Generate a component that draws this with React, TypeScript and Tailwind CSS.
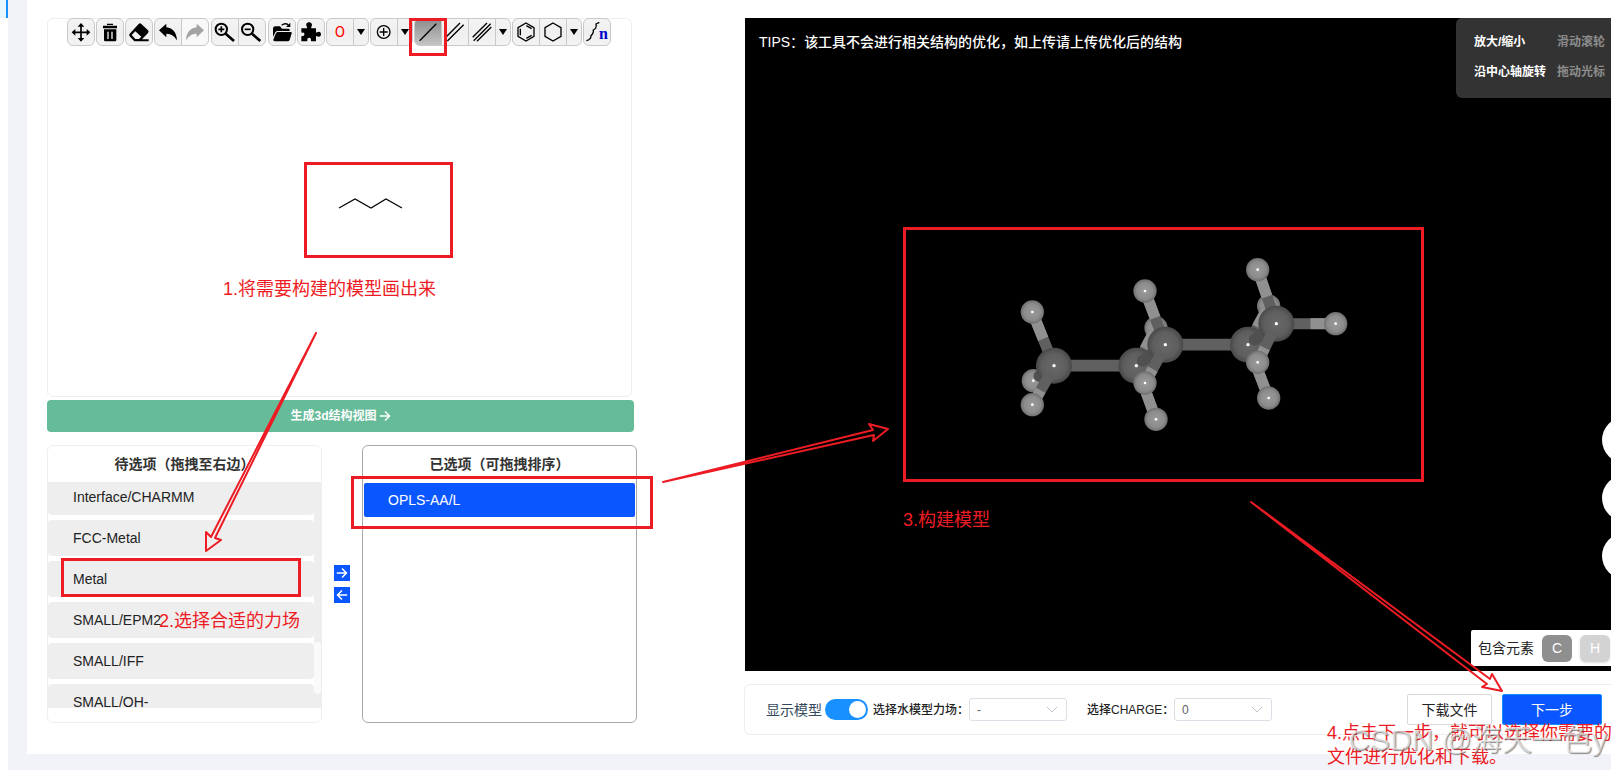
import { useState, type ReactNode } from "react";

type ToolProps = {
  label: string;
  active?: boolean;
  disabled?: boolean;
  children: ReactNode;
};

const candidates = [
  "Interface/CHARMM",
  "FCC-Metal",
  "Metal",
  "SMALL/EPM2",
  "SMALL/IFF",
  "SMALL/OH-",
];

function Tool({ label, active, disabled, children }: ToolProps) {
  return (
    <button
      type="button"
      aria-label={label}
      disabled={disabled}
      className={
        "relative -ml-px flex h-7 w-7 items-center justify-center border border-[#c9c9c9] first:ml-0 first:rounded-l-md last:rounded-r-md " +
        (active
          ? "bg-linear-to-b from-[#8c8c8c] to-[#c4c4c4]"
          : disabled
            ? "bg-[#f8f8f8] text-[#a3a3a3]"
            : "bg-linear-to-b from-[#f4f4f4] via-[#efefef] to-[#f3f3f3] text-black")
      }
    >
      {children}
    </button>
  );
}

function Group({ children }: { children: ReactNode }) {
  return <div className="flex">{children}</div>;
}

function Glyph({ children }: { children: ReactNode }) {
  return (
    <svg viewBox="0 0 78 78" className="h-[26px] w-[26px] shrink-0" fill="currentColor">
      {children}
    </svg>
  );
}

function Lines({ d, width = 4 }: { d: string; width?: number }) {
  return <path d={d} fill="none" stroke="currentColor" strokeWidth={width} />;
}

function DropTool({ label }: { label: string }) {
  return (
    <button
      type="button"
      aria-label={label}
      className="-ml-px flex h-7 w-4 items-center justify-center rounded-r-md border border-[#c9c9c9] bg-linear-to-b from-[#f4f4f4] via-[#efefef] to-[#f3f3f3]"
    >
      <svg viewBox="0 0 8 6" className="h-[6px] w-2">
        <path d="M0 0h8L4 6z" />
      </svg>
    </button>
  );
}

function Toolbar() {
  return (
    <div className="-mt-px ml-[19px] flex gap-px">
      <Group>
        <Tool label="Move">
          <Glyph>
            <Lines d="M39 18V62M17 40H61" width={5} />
            <path d="M39 12l10 11H29zM39 68l10-11H29zM11 40l11-10v20zM67 40L56 30v20z" />
          </Glyph>
        </Tool>
      </Group>
      <Group>
        <Tool label="Clear">
          <Glyph>
            <path d="M30 14h18v4H30zM18 20h42v8H18z" />
            <path
              fillRule="evenodd"
              d="M21 31h37v32q0 4-4 4H25q-4 0-4-4zM31 38v22h4V38zM43 38v22h4V38z"
            />
          </Glyph>
        </Tool>
      </Group>
      <Group>
        <Tool label="Erase">
          <Glyph>
            <path
              fillRule="evenodd"
              d="M38 15q4-4 8 0l20 19q4 4 0 8L48 61h20v6H25L11 52q-3-4 0-8zM28 37L17 48l11 12h11l7-7z"
            />
          </Glyph>
        </Tool>
      </Group>
      <div className="mr-px flex">
        <Tool label="Undo">
          <Glyph>
            <path d="M12 34L34 14v11c20 2 31 17 32 39-8-13-17-19-32-20v11z" />
          </Glyph>
        </Tool>
        <Tool label="Redo" disabled>
          <Glyph>
            <path d="M66 34L44 14v11C24 27 13 42 12 64c8-13 17-19 32-20v11z" />
          </Glyph>
        </Tool>
      </div>
      <div className="mr-px flex">
        <Tool label="Zoom in">
          <Glyph>
            <circle cx="28" cy="31" r="17" fill="none" stroke="currentColor" strokeWidth="6" />
            <Lines d="M28 22v18M19 31h18" width={5} />
            <Lines d="M41 44L66 66" width={8} />
          </Glyph>
        </Tool>
        <Tool label="Zoom out">
          <Glyph>
            <circle cx="26" cy="31" r="17" fill="none" stroke="currentColor" strokeWidth="6" />
            <Lines d="M17 31h18" width={5} />
            <Lines d="M39 44L64 66" width={8} />
          </Glyph>
        </Tool>
      </div>
      <Group>
        <Tool label="Open">
          <Glyph>
            <path d="M12 29q0-7 7-7h14l6 7h19q4 0 4 4v3H26q-5 0-7 4l-7 14z" />
            <path d="M26 39h39q4 0 3 4l-6 20q-2 4-6 4H18q-5 0-5-5l7-18q2-5 6-5z" />
            <Lines d="M38 19q11-9 20-1" width={4} />
            <path d="M64 11v13H51z" />
          </Glyph>
        </Tool>
      </Group>
      <Group>
        <Tool label="Templates">
          <Glyph>
            <path d="M10 28h16q3 0 1-4c-5-7-1-14 6-14s12 7 7 14q-2 4 1 4h13v11q0 3 4 1c6-4 11 0 11 6s-5 10-11 6q-4-2-4 1v14H41q-3 0-2-4c1-9-12-9-11 0q1 4-2 4H10V53q0-3 4-2c7 2 7-12 0-10q-4 1-4-2z" />
          </Glyph>
        </Tool>
      </Group>
      <Group>
        <Tool label="Oxygen">
          <span className="font-[Roboto,sans-serif] text-[15px] leading-none text-[#ff0000]">O</span>
        </Tool>
        <DropTool label="Choose element" />
      </Group>
      <Group>
        <Tool label="Increase charge">
          <Glyph>
            <circle cx="38" cy="39" r="19" fill="none" stroke="currentColor" strokeWidth="4" />
            <Lines d="M38 27v24M26 39h24" />
          </Glyph>
        </Tool>
        <DropTool label="Choose attribute" />
      </Group>
      <Group>
        <Tool label="Single bond" active>
          <Glyph>
            <Lines d="M14 65L64 14" />
          </Glyph>
        </Tool>
        <Tool label="Double bond">
          <Glyph>
            <Lines d="M10 56L54 12M16 66L65 17" />
          </Glyph>
        </Tool>
        <Tool label="Triple bond">
          <Glyph>
            <Lines d="M11 55L54 12M14 65L65 14M24 67L67 24" />
          </Glyph>
        </Tool>
        <DropTool label="Choose bond" />
      </Group>
      <Group>
        <Tool label="Benzene">
          <Glyph>
            <Lines d="M39 12L63 26V52L39 66L15 52V26ZM22 29V49M40 20L56 29M56 49L40 58" />
          </Glyph>
        </Tool>
        <Tool label="Cyclohexane">
          <Glyph>
            <Lines d="M39 12L63 26V52L39 66L15 52V26Z" />
          </Glyph>
        </Tool>
        <DropTool label="Choose ring" />
      </Group>
      <Group>
        <Tool label="Chain">
          <Glyph>
            <Lines d="M46 10q-6 3-10 5q2 7-1 12q-2 4-7 6q1 6-2 11q-2 4-5 6q0 6-3 9q-4 5-11 6" />
          </Glyph>
          <span className="absolute right-[2px] bottom-[3px] font-['Liberation_Serif',serif] text-base leading-none font-bold text-[#0000cc]">
            n
          </span>
        </Tool>
      </Group>
    </div>
  );
}

type Point = [number, number];
type Bond = { from: Point; to: Point; tone: "cc" | "ch" | "hidden" };

function BondShape({ from, to, tone }: Bond) {
  const mid: Point = [(from[0] + to[0]) / 2, (from[1] + to[1]) / 2];
  return (
    <g strokeWidth={tone === "ch" ? 33 : 35}>
      <line
        x1={from[0]}
        y1={from[1]}
        x2={to[0]}
        y2={to[1]}
        stroke={tone === "hidden" ? "#505050" : "#606060"}
        strokeLinecap={tone === "hidden" ? "round" : "butt"}
      />
      {tone === "ch" && (
        <line x1={mid[0]} y1={mid[1]} x2={to[0]} y2={to[1]} stroke="#909090" />
      )}
    </g>
  );
}

function Atom({ x, y, carbon }: { x: number; y: number; carbon?: boolean }) {
  return (
    <g>
      <circle cx={x} cy={y} r={carbon ? 54 : 35} fill={carbon ? "url(#carbon)" : "url(#hydrogen)"} />
      <circle cx={x} cy={y} r={carbon ? 5 : 4} fill="#ffffff" />
    </g>
  );
}

function Molecule() {
  return (
    <svg viewBox="0 0 1200 630" className="ml-1 h-[210px] w-[400px]" role="img" aria-label="戊烷">
      <defs>
        <radialGradient id="carbon">
          <stop offset="0" stopColor="#686868" />
          <stop offset="0.7" stopColor="#5e5e5e" />
          <stop offset="1" stopColor="#484848" />
        </radialGradient>
        <radialGradient id="hydrogen">
          <stop offset="0" stopColor="#9a9a9a" />
          <stop offset="0.7" stopColor="#8c8c8c" />
          <stop offset="1" stopColor="#6e6e6e" />
        </radialGradient>
      </defs>

      <Atom x={160} y={422} />
      <BondShape from={[222, 377]} to={[178, 408]} tone="hidden" />
      <BondShape from={[222, 377]} to={[157, 216]} tone="ch" />
      <BondShape from={[222, 377]} to={[469, 377]} tone="cc" />
      <Atom x={222} y={377} carbon />
      <BondShape from={[207, 408]} to={[157, 494]} tone="ch" />
      <Atom x={157} y={216} />
      <Atom x={157} y={494} />

      <Atom x={528} y={264} />
      <BondShape from={[469, 377]} to={[522, 275]} tone="ch" />
      <BondShape from={[469, 377]} to={[528, 538]} tone="ch" />
      <BondShape from={[556, 314]} to={[804, 314]} tone="cc" />
      <Atom x={469} y={377} carbon />
      <BondShape from={[488, 362]} to={[540, 325]} tone="hidden" />
      <BondShape from={[556, 314]} to={[495, 153]} tone="ch" />
      <Atom x={556} y={314} carbon />
      <BondShape from={[541, 345]} to={[495, 429]} tone="ch" />
      <Atom x={495} y={153} />
      <Atom x={495} y={429} />
      <Atom x={528} y={538} />

      <Atom x={866} y={198} />
      <BondShape from={[804, 314]} to={[860, 209]} tone="ch" />
      <BondShape from={[804, 314]} to={[866, 474]} tone="ch" />
      <Atom x={804} y={314} carbon />
      <BondShape from={[824, 299]} to={[870, 265]} tone="hidden" />
      <BondShape from={[889, 251]} to={[833, 89]} tone="ch" />
      <BondShape from={[916, 251]} to={[1067, 251]} tone="ch" />
      <Atom x={889} y={251} carbon />
      <BondShape from={[876, 280]} to={[833, 367]} tone="ch" />
      <Atom x={833} y={89} />
      <Atom x={833} y={367} />
      <Atom x={866} y={474} />
      <Atom x={1067} y={251} />
    </svg>
  );
}

function ArrowIcon({ left, className }: { left?: boolean; className: string }) {
  return (
    <svg viewBox="0 0 16 16" className={className} fill="none" stroke="currentColor" strokeWidth="2">
      <path d={left ? "M15 8H2M8 2L2 8l6 6" : "M1 8h13M8 2l6 6-6 6"} />
    </svg>
  );
}

function ForceFieldLists() {
  return (
    <div className="mt-[13px] flex h-[278px]">
      <section className="flex-1 rounded-md border border-[#eeeeee]">
        <h2 className="h-9 text-center text-sm leading-9 font-bold text-[#333333]">
          待选项（拖拽至右边）
        </h2>
        <div className="flex h-[226px] overflow-hidden bg-[#eeeeee]">
          <ul className="-mt-[3px] flex flex-1 flex-col gap-[5px] bg-white">
            {candidates.map((name) => (
              <li
                key={name}
                className="flex h-9 shrink-0 items-center rounded bg-[#eeeeee] pl-[25px] text-sm leading-none text-[#222222]"
              >
                {name}
              </li>
            ))}
          </ul>
          <div className="flex w-[7px] flex-col justify-end pb-[14px]">
            <div className="h-[52px] rounded bg-[#fafafa]" />
          </div>
        </div>
      </section>
      <div className="flex w-10 flex-col items-center justify-center gap-[6px]">
        <button type="button" aria-label="添加" className="bg-[#0b57ff] p-0.5 text-white">
          <ArrowIcon className="h-3 w-3" />
        </button>
        <button type="button" aria-label="移除" className="bg-[#0b57ff] p-0.5 text-white">
          <ArrowIcon left className="h-3 w-3" />
        </button>
      </div>
      <section className="flex-1 rounded-md border border-[#a9a9a9]">
        <h2 className="h-[37px] text-center text-sm leading-9 font-bold text-[#333333]">
          已选项（可拖拽排序）
        </h2>
        <ul className="px-px">
          <li className="h-[34px] rounded-xs bg-[#0b57ff] pl-6 text-sm leading-[34px] text-white">
            OPLS-AA/L
          </li>
        </ul>
      </section>
    </div>
  );
}

function SmallSelect({ id, options }: { id: string; options: string[] }) {
  return (
    <div className="relative">
      <select
        id={id}
        className="h-[23px] w-[98px] appearance-none rounded-[3px] border border-[#dcdfe6] bg-white pl-[7px] text-xs text-[#606266]"
      >
        {options.map((option) => (
          <option key={option}>{option}</option>
        ))}
      </select>
      <svg
        viewBox="0 0 10 6"
        className="pointer-events-none absolute top-[9px] right-[10px] h-[6px] w-[10px]"
        fill="none"
        stroke="#c0c4cc"
      >
        <path d="M0 0L5 5L10 0" />
      </svg>
    </div>
  );
}

function Viewer() {
  return (
    <div className="relative flex h-[653px] items-center justify-center overflow-hidden bg-black">
      <p className="absolute top-[13px] left-[14px] text-sm leading-[22px] font-medium text-white">
        <span className="font-normal">TIPS：</span>
        该工具不会进行相关结构的优化，如上传请上传优化后的结构
      </p>
      <Molecule />
      <dl className="absolute top-0 right-0 grid h-20 w-[155px] grid-cols-[83px_auto] content-start rounded-l-md bg-[#333333] pt-[9px] pl-[18px] text-xs leading-[30px] font-bold whitespace-nowrap text-white">
        <dt>放大/缩小</dt>
        <dd className="text-[#8c8c8c]">滑动滚轮</dd>
        <dt>沿中心轴旋转</dt>
        <dd className="text-[#8c8c8c]">拖动光标</dd>
      </dl>
      <div className="absolute top-[399px] -right-[37px] flex flex-col gap-3">
        <button type="button" aria-label="放大" className="h-[46px] w-[46px] rounded-full bg-white" />
        <button type="button" aria-label="缩小" className="h-[46px] w-[46px] rounded-full bg-white" />
        <button type="button" aria-label="重置" className="h-[46px] w-[46px] rounded-full bg-white" />
      </div>
      <div className="absolute right-0 bottom-[5px] flex h-9 items-center gap-2 rounded-l-xs bg-white pr-px pl-[7px] text-sm text-[#222222]">
        包含元素
        <button type="button" className="h-[27px] w-[30px] rounded-md bg-[#8f8f8f] text-white">
          C
        </button>
        <button type="button" className="h-[27px] w-[30px] rounded-md bg-[#d3d3d3] text-white shadow">
          H
        </button>
      </div>
    </div>
  );
}

function ModelBar() {
  const [visible, setVisible] = useState(true);

  return (
    <div className="mt-[13px] -ml-px flex h-[51px] items-center rounded-l-md border border-r-0 border-[#eeeeee] pr-[9px] pl-[21px] text-xs whitespace-nowrap text-[#222222]">
      <label htmlFor="show-model" className="text-sm text-[#34495e]">
        显示模型
      </label>
      <span className="relative ml-[3px] h-[21px] w-[43px]">
        <input
          id="show-model"
          type="checkbox"
          role="switch"
          checked={visible}
          onChange={(event) => setVisible(event.target.checked)}
          className="peer block h-[21px] w-[43px] appearance-none rounded-full bg-[#bfbfbf] checked:bg-[#1890ff]"
        />
        <span className="pointer-events-none absolute top-[2px] left-[2px] h-[17px] w-[17px] rounded-full bg-white peer-checked:left-6" />
      </span>
      <label htmlFor="water-model" className="ml-[5px] w-24 font-medium">
        选择水模型力场：
      </label>
      <SmallSelect id="water-model" options={["-", "SPC", "TIP3P"]} />
      <label htmlFor="charge" className="ml-5 w-[87px] font-medium">
        选择CHARGE：
      </label>
      <SmallSelect id="charge" options={["0", "1", "-1"]} />
      <button
        type="button"
        className="ml-auto h-[31px] w-[85px] rounded-xs border border-[#d9d9d9] bg-white text-sm"
      >
        下载文件
      </button>
      <button
        type="button"
        className="ml-[10px] h-[31px] w-[100px] rounded-xs border border-[#1890ff] bg-[#0b57ff] text-sm text-white"
      >
        下一步
      </button>
    </div>
  );
}

function Annotations() {
  return (
    <div className="pointer-events-none absolute inset-0 overflow-hidden text-lg leading-6 whitespace-nowrap text-[#ed1c24]">
      <svg className="absolute inset-0 h-full w-full" fill="none" stroke="#ed1c24">
        <g strokeWidth="3">
          <rect x="410.5" y="19.5" width="35" height="35" />
          <rect x="305.5" y="163.5" width="146" height="93" />
          <rect x="62.5" y="559.5" width="237" height="36" />
          <rect x="352.5" y="477.5" width="299" height="50" />
          <rect x="904.5" y="228.5" width="518" height="252" />
        </g>
        <g strokeWidth="2" strokeLinejoin="round">
          <path d="M316 333L211 537L206 532V551L221 540L215 538Z" />
          <path d="M663 482L873 430L869 424L888 429L873 441L874 435Z" />
          <path d="M1251 502L1490 679L1492 674L1502 691L1482 687L1487 684Z" />
        </g>
      </svg>
      <p className="absolute top-[277px] left-[223px]">1.将需要构建的模型画出来</p>
      <p className="absolute top-[609px] left-[159px]">2.选择合适的力场</p>
      <p className="absolute top-[508px] left-[903px]">3.构建模型</p>
      <p className="absolute top-[721px] left-[1327px]">
        4.点击下一步，就可以选择你需要的
        <br />
        文件进行优化和下载。
      </p>
      <p className="absolute right-1 bottom-3 text-[30px] leading-9 text-white/60 [text-shadow:1px_1px_1px_rgba(90,90,90,0.7)]">
        CSDN @海天一色y
      </p>
    </div>
  );
}

export default function App() {
  return (
    <div className="relative flex min-h-screen overflow-hidden bg-[#f2f3f8] font-['Liberation_Sans','Noto_Sans_CJK_SC',sans-serif]">
      <aside className="w-2 shrink-0 bg-white">
        <div className="h-[18px] border-r-2 border-[#1890ff] bg-[#e6f7ff]" />
      </aside>
      <main className="mb-4 ml-[19px] flex min-w-0 flex-1 bg-white pt-[18px] pb-[19px] pl-5">
        <div className="mr-[108px] w-[590px] shrink-0">
          <div className="mr-[5px] flex h-[379px] flex-col rounded-md border border-[#eeeeee]">
            <Toolbar />
            <svg className="w-full flex-1" fill="none" stroke="#000000" strokeWidth="1.2">
              <path d="M291 162L307 153L323 162L338 153L354 162" />
            </svg>
          </div>
          <button
            type="button"
            className="mt-[3px] flex h-8 w-[587px] items-center justify-center gap-0.5 rounded bg-[#66bb99] text-xs font-bold text-white"
          >
            生成3d结构视图
            <ArrowIcon className="h-3 w-3" />
          </button>
          <ForceFieldLists />
        </div>
        <div className="min-w-0 flex-1">
          <Viewer />
          <ModelBar />
        </div>
      </main>
      <Annotations />
    </div>
  );
}
